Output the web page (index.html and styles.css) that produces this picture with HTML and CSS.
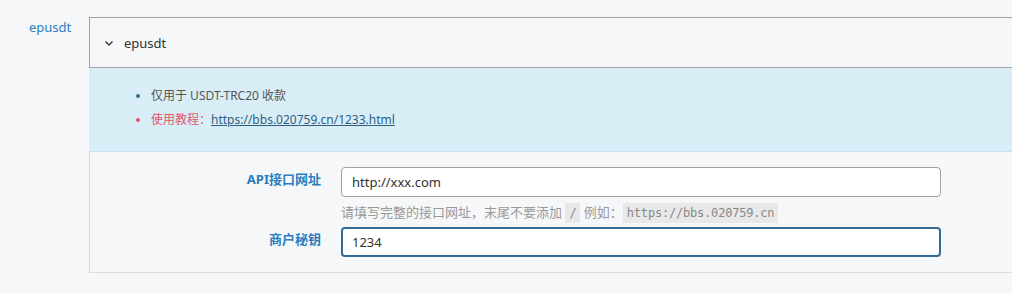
FILE: index.html
```html
<!DOCTYPE html>
<html lang="zh-CN">
<head>
  <meta charset="UTF-8" />
  <title>epusdt</title>
  <link rel="stylesheet" href="styles.css">
</head>
<body>
  <div class="field">
    <div class="field-name">epusdt</div>
    <div class="panel">
      <div class="panel-head">
        <svg class="chevron" width="10" height="8" viewBox="0 0 10 8"><path d="M1.5 2.5 L5 6 L8.5 2.5" fill="none" stroke="#333" stroke-width="1.4"/></svg>
        <span>epusdt</span>
      </div>
      <div class="panel-info">
        <ul>
          <li>仅用于 USDT-TRC20 收款</li>
          <li class="warn">使用教程：<a href="#">https://bbs.020759.cn/1233.html</a></li>
        </ul>
      </div>
      <div class="panel-body">
        <div class="form-row">
          <label>API接口网址</label>
          <div class="control">
            <input type="text" value="http://xxx.com" />
            <div class="help">请填写完整的接口网址，末尾不要添加 <code>/</code> 例如：<code>https://bbs.020759.cn</code></div>
          </div>
        </div>
        <div class="form-row">
          <label>商户秘钥</label>
          <div class="control">
            <input type="text" class="focus" value="1234" />
          </div>
        </div>
      </div>
    </div>
  </div>
</body>
</html>
```

FILE: styles.css
```css
body {
  margin: 0;
  background: #f5f7f9;
  font-family: "Noto Sans", "Noto Sans CJK SC", sans-serif;
  font-size: 12px;
  color: #555;
}

.field {
  display: flex;
  padding-top: 17px;
}

.field-name {
  flex: 0 0 60px;
  padding-left: 29px;
  padding-top: 1px;
  font-size: 13px;
  color: #2b7fc0;
}

.panel {
  flex: 1;
}

.panel-head {
  display: flex;
  align-items: center;
  height: 49px;
  border: 1px solid #a3a3a3;
  border-right: none;
  color: #333;
  font-size: 13px;
}

.chevron {
  margin-left: 14px;
  margin-right: 10px;
}

.panel-info {
  background: #d9edf7;
  border-bottom: 1px solid #c4e3f1;
  padding: 16px 0 19px;
}

.panel-info ul {
  margin: 0;
  padding-left: 62px;
}

.panel-info li {
  line-height: 24px;
  color: #555;
}

.panel-info li::marker {
  color: #31708f;
}

.panel-info li.warn {
  color: #e0566a;
}

.panel-info li.warn::marker {
  color: #e0566a;
}

.panel-info a {
  color: #2e5f80;
}

.panel-body {
  border-left: 1px solid #dcdcdc;
  border-bottom: 1px solid #dcdcdc;
  padding: 15px 0 15px;
}

.form-row {
  display: flex;
  align-items: flex-start;
}

.form-row label {
  flex: 0 0 231px;
  text-align: right;
  padding-right: 20px;
  padding-top: 2px;
  font-size: 13px;
  font-weight: bold;
  color: #2b7fc0;
}

.control {
  width: 600px;
}

.control input {
  box-sizing: border-box;
  width: 600px;
  height: 30px;
  padding: 0 10px;
  border: 1px solid #a0a0a0;
  border-radius: 4px;
  background: #fff;
  font-family: "Noto Sans", "Noto Sans CJK SC", sans-serif;
  font-size: 13px;
  color: #333;
  outline: none;
}

.control input.focus {
  border: 2px solid #336a96;
  padding: 0 9px;
}

.help {
  height: 31px;
  line-height: 31px;
  margin-bottom: -1px;
  font-size: 13px;
  color: #999;
}

.help code {
  background: #e8e8e8;
  padding: 3px 4px;
  font-family: "DejaVu Sans Mono", monospace;
  font-size: 12px;
  letter-spacing: -0.2px;
  color: #888;
}
```
